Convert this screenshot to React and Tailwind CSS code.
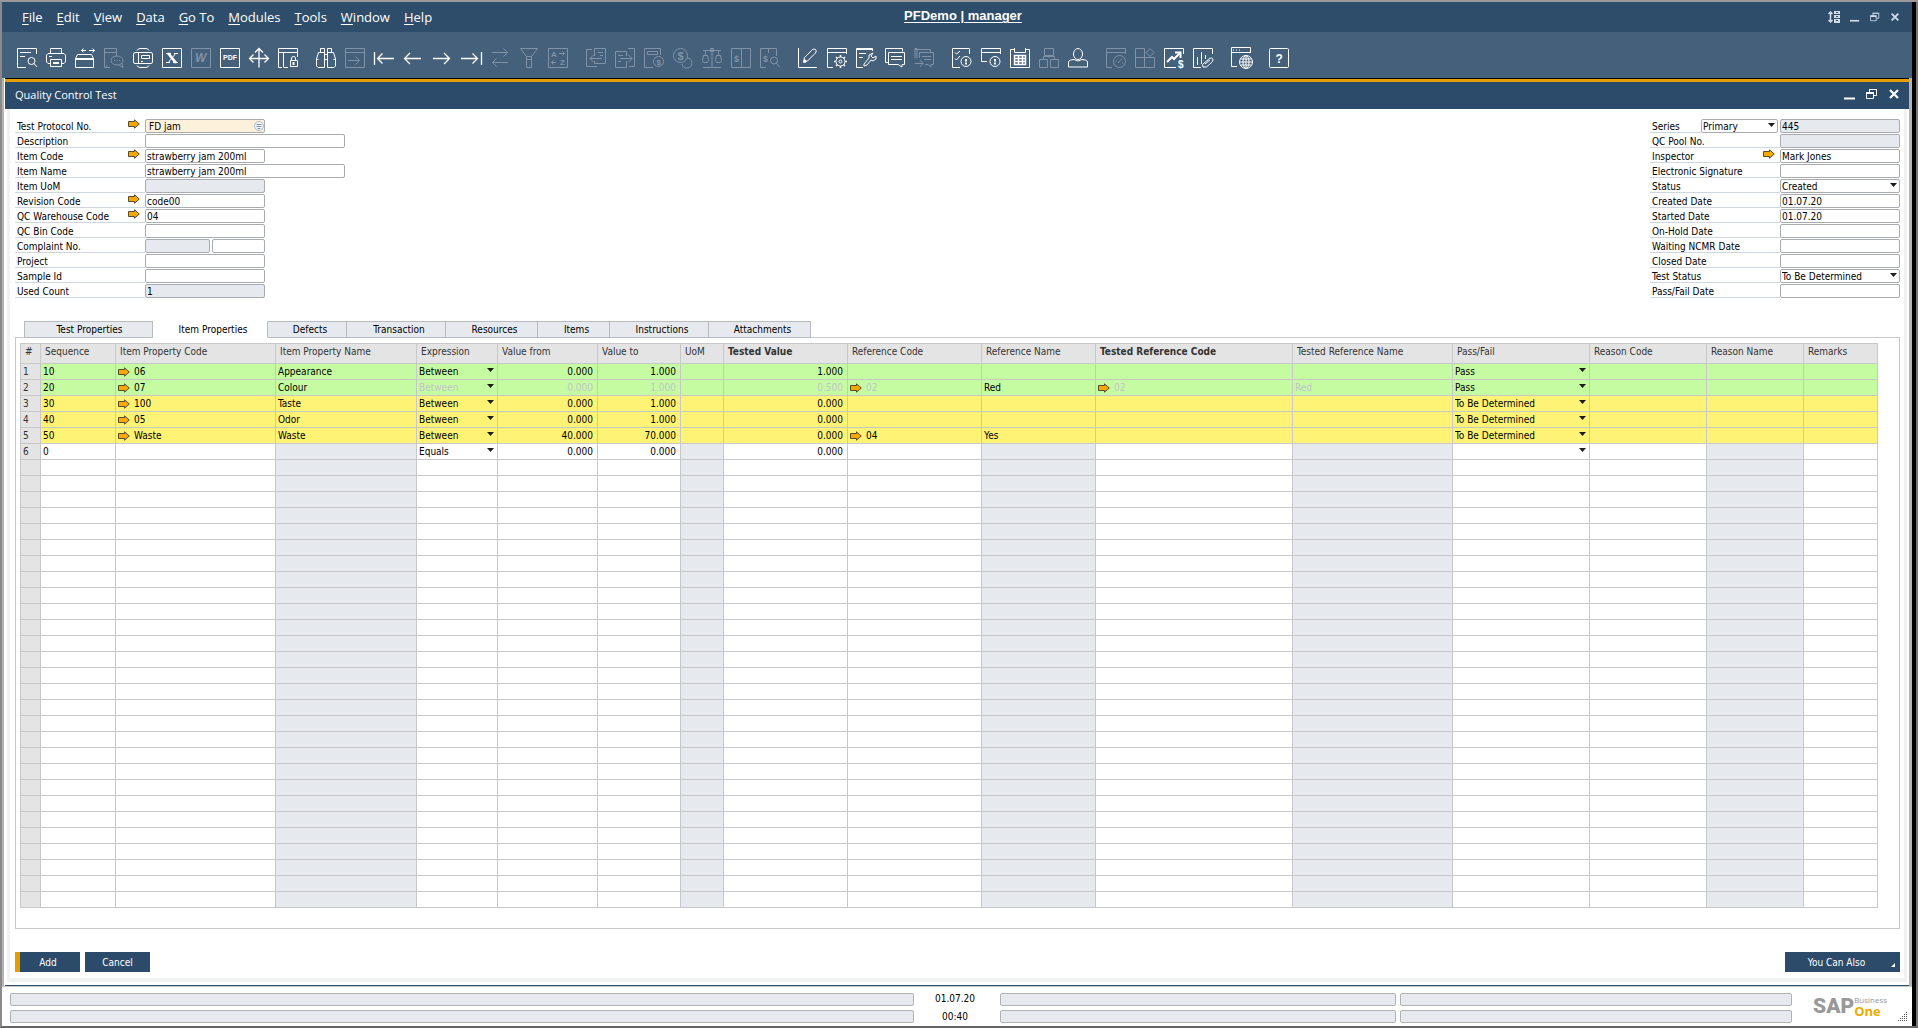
import { useState } from 'react'

const menus = ['File', 'Edit', 'View', 'Data', 'Go To', 'Modules', 'Tools', 'Window', 'Help']

const glyph = { fontFamily: 'Liberation Sans, sans-serif', fill: 'currentColor', stroke: 'none' }

// [name, drawing, disabled]
const toolGroups = [
  [
    ['Preview', <><path d="M19.500 6V.5H.5v19H9M3 4.500h11M3 8.500h5" /><circle cx="14.500" cy="13" r="3.500" /><path d="M17 15.500l3 3.500" /></>],
    ['Print', <><path d="M4.500 5V.5h11V5M4.500 15.500H2L.5 14V7L2 5.500h16L19.500 7v7L18 15.500h-2.500M3 8.500h3M4.500 11.500h11v7h-11z" /><path d="M7 15h6" strokeWidth="2" /></>],
    ['Send', <><path d="M.5 10.500h18v9H.5zM.5 10.500l2-4h14l2 4M6 2.500h5M14 2.500h6M8.500.5l-2 2 2 2M17.500.5l2 2-2 2M.5 11.500h18" /></>],
    ['SMS', <><path d="M12.500 8V.5H.5v19H6M.5 4.500h12M3 19.500V17" /><ellipse cx="13" cy="12.500" rx="6" ry="4.500" /><path d="M15 17l4 2.500-1-4.500M10 12.500h1M12.500 12.500h1M15 12.500h1" /></>, true],
    ['Fax', <><path d="M3 4.500h15q1.500 0 1.500 1.500v8q0 1.500-1.500 1.500H2Q.5 15.500.5 14V6Q.5 4.500 3 4.500zM5.500 4.500v11M8.500 7.500h8v3h-8zM8 13.500h2M4 2.500Q5 .5 7 .5h6q2 0 3 2M4 17.500q1 2 3 2h6q2 0 3-2" /></>],
    ['Export to Excel', <><path d="M.5.5h19v19H.5z" /><path d="M5.500 5l8 10M6.500 5l8 10" strokeWidth="2" /><path d="M14 5l-8 10M12 5.500h4M4 14.500h4M4 5.500h5M11 14.500h5" /></>],
    ['Export to Word', <><path d="M.5.5h19v19H.5z" /><text x="4" y="14" fontSize="12" fontWeight="bold" fontStyle="italic" style={glyph}>W</text></>, true],
    ['Export to PDF', <><path d="M.5.5h19v19H.5z" /><text x="3" y="12" fontSize="7" fontWeight="bold" style={glyph}>PDF</text></>],
    ['Launch Application', <><path d="M10 .5v19M.5 10.500h19M6 4.500L10 .5l4 4M4.500 6.500l-4 4 4 4M15.500 6.500l4 4-4 4" strokeWidth="1.300" /></>],
    ['Lock Screen', <><path d="M10 19.500H6M4 19.500H.5V.5h19V9M.5 4.500h19M5.500 4.500v15M13.500 12V10q0-1.500 2-1.500t2 1.500v2" /><path d="M12.500 12.500h7v6h-7z" /><path d="M15.500 14v3" strokeWidth="2" /></>],
  ],
  [
    ['Find', <><path d="M4.500 4V.5h4V5M11.500 5V.5h4V4M2.500 4.500h6v15H2L.5 18v-7zM17.500 4.500h-6v15H18l1.500-1.500v-7zM8.500 6.500h3M8.500 11.500h3M.5 11.500h2M19.500 11.500h-2" /></>],
    ['Add Record', <><path d="M.5.5h19v19H.5zM.5 4.500h19M3 12.500h11M10.500 8.500l4 4-4 4" /></>, true],
    ['First Record', <><path d="M.5 4v13M4 10.500h16M8.500 5.500l-5 5 5 5" strokeWidth="1.300" /></>],
    ['Previous Record', <><path d="M2 10.500h16M7 5l-5.500 5.500L7 16" strokeWidth="1.300" /></>],
    ['Next Record', <><path d="M1 10.500h16M12 5l5.500 5.500L12 16" strokeWidth="1.300" /></>],
    ['Last Record', <><path d="M0 10.500h16M11.500 5.500l5 5-5 5M20.500 4v13" strokeWidth="1.300" /></>],
    ['Refresh', <><path d="M2 4.500h16M13.500.5l4 4-4 4M2 14.500h16M6.500 10.500l-4 4 4 4" /></>, true],
    ['Filter', <><path d="M1.500.5h17l-6 8v11h-5v-11zM7.500 8.500h5M7.500 11.500h5" /></>, true],
    ['Sort', <><path d="M.5.5h19v19H.5zM11 5.500h5M14.500 3.500l2 2-2 2M3 14.500h5M5.500 12.500l-2 2 2 2" /><text x="3" y="9" fontSize="8" fontWeight="bold" style={glyph}>A</text><text x="12" y="17" fontSize="8" fontWeight="bold" style={glyph}>Z</text></>, true],
  ],
  [
    ['Base Document', <><path d="M6 1.500H.5v17H11M8.500 8V.5h11v15h-11V13M12 4.500h5M14 7.500h3M4 10.500h12M7.500 7l-3.500 3.500 3.500 3.500" /></>, true],
    ['Target Document', <><path d="M13 .5h6.500v18H14M11.500 13v6.500H.5v-16h11V8M3 7.500h5M3 13.500h3M5 10.500h12M13.500 7l3.500 3.500-3.500 3.500" /></>, true],
    ['Gross Profit', <><path d="M16.500 7V.5H.5v19H9M3.500 3.500h10v3h-10z" /><circle cx="14.500" cy="13.500" r="5" /><text x="12.500" y="16.500" fontSize="8" fontWeight="bold" style={glyph}>$</text></>, true],
    ['Payment Means', <><circle cx="7.500" cy="7.500" r="7" /><path d="M14 10a5 5 0 1 1-5 6" /><text x="4.500" y="11.500" fontSize="11" fontWeight="bold" style={glyph}>$</text></>, true],
    ['Volume and Weight', <><path d="M1 2.500h18M10 0v19M1 19.500h18M8.500.5h3v3h-3zM3.500 3v4M16.500 3v4M1.500 7.500h4l1 5-1 2h-4l-1-2zM14.500 7.500h4l1 5-1 2h-4l-1-2z" /></>, true],
    ['Journal Preview', <><path d="M.5.5h19v19H.5zM10.500.5v19" /><text x="3" y="14" fontSize="9" fontWeight="bold" style={glyph}>$</text></>, true],
    ['Transaction Journal', <><path d="M16.500 8V.5H.5v19H6M8.500.5V5" /><text x="3" y="14" fontSize="9" fontWeight="bold" style={glyph}>$</text><circle cx="14" cy="12.500" r="3.500" /><path d="M16.500 15l3 4" /></>, true],
  ],
  [
    ['Layout Designer', <><path d="M.5 0v19.500H19M6.500 9.500l8-8q1.500-1 3 0t0 3.500l-8 8-4 1.500z" /><path d="M6 12l2 2" strokeWidth="2.500" /></>],
    ['Form Settings', <><path d="M19.500 6V.5H.5v19H6M.5 4.500h19" /><circle cx="13.500" cy="13.500" r="4.500" /><circle cx="13.500" cy="13.500" r="1.500" /><path d="M13.500 7v2M13.500 18v2M7 13.500h2M18 13.500h2M9 9l1.500 1.500M18 9l-1.500 1.500M9 18l1.500-1.500M18 18l-1.500-1.500" strokeWidth="1.500" /></>],
    ['Form Edit', <><path d="M16.500 3V.5H.5v19H7M3 5.500h7M3 9.500h4M.5 1.500h16M17 5l-2 3 2 2 3-2v3l-3 2-2-1-4 5-3 1v-2l5-6v-3z" /></>],
    ['Messages', <><path d="M4 14.500H.5V.5h17v3M3.500 4.500h16v12H17v2.500l-4-2.500H3.500zM6 8.500h11M6 11.500h11" /></>],
    ['Alerts', <><path d="M3 10V.5h-2v10M1 1.500h15.500V4M5.500 10V4.500h14v12H17v2.500l-3-2.500h-3M8 8.500h9M10 11.500h7M1 15.500h8M6 12l3 3.500-3 3.500" /></>, true],
  ],
  [
    ['Approval', <><path d="M17.500 6V.5H.5v19H8M3 4.500l1.500 1.500L8 3M3 10.500l1.500 1.500L8 8" /><circle cx="14" cy="13.500" r="5" /><path d="M14 11v2.500M14 14.500v2" strokeWidth="2" /></>],
    ['Decisions', <><path d="M19.500 6V.5H.5v13H6M.5 4.500h19" /><circle cx="14" cy="13.500" r="5" /><path d="M14 11v2.500M14 14.500v2" strokeWidth="2" /></>],
    ['Calendar', <><path d="M4.500 1.500h-4v18h19v-18h-4M4.500 0v4.500h11V0" /><path d="M4.500 7.500h11v9h-11zM8.500 7.500v9M12.500 7.500v9M4.500 10.500h11M4.500 13.500h11" strokeWidth="1.500" /></>],
    ['Org Chart', <><path d="M5.500.5h9v7h-9zM.5 11.500h8v8h-8zM11.500 11.500h8v8h-8zM10 7.500V10M4.500 11V8.500h11V11" /></>, true],
    ['User', <><ellipse cx="10" cy="6" rx="4.500" ry="5.500" /><path d="M6 11.500q-4 0-5.500 2v5.500h19v-5.500q-1.500-2-5.500-2M6 11.500q4 3 8 0" /></>],
  ],
  [
    ['Cockpit', <><path d="M19.500 6V.5H.5v19H6M.5 4.500h19" /><circle cx="13.500" cy="13.500" r="6" /><path d="M12 15l4-4.500M10 13h1M16 15h1" /></>, true],
    ['Widgets', <><path d="M.5.5h9v19H.5zM.5 9.500h19v10h-10M15 .5l4 4-4 4-4-4z" /></>, true],
    ['Sales Analysis', <><path d="M19.500 6V.5H.5v19H12" /><path d="M3 14l5-5 2 2 6-6M11 4.500h5.500V10" strokeWidth="2" /><text x="14" y="19.500" fontSize="10" fontWeight="bold" style={glyph}>$</text></>],
    ['Report', <><path d="M19.500 6V.5H.5v19H8M4.500 9v8M8.500 4v12M12.500 7v4M9.500 16.500l7-6q2-1 3 0t0 3l-6 5.500h-3.500zM12 16l5-4" /></>],
  ],
  [
    ['Browser', <><path d="M19.500 5V-.5H.5v19H6M.5 4.500h19M2 2h1M5 2h1M8 2h1" /><circle cx="15" cy="14" r="6.500" /><ellipse cx="15" cy="14" rx="3" ry="6.500" /><path d="M15 7.500v13M8.500 14h13M9.500 11h11M9.500 17h11" /></>],
  ],
  [
    ['Help', <><rect x=".5" y=".5" width="19" height="19" rx="1" /><text x="6.500" y="14.500" fontSize="12" fontWeight="bold" style={glyph}>?</text></>],
  ],
]

const leftFields = [
  { id: 'protocol', label: 'Test Protocol No.', value: 'FD jam', arrow: true, lookup: true },
  { id: 'description', label: 'Description', value: '', wide: true },
  { id: 'itemCode', label: 'Item Code', value: 'strawberry jam 200ml', arrow: true },
  { id: 'itemName', label: 'Item Name', value: 'strawberry jam 200ml', wide: true },
  { id: 'uom', label: 'Item UoM', value: '', locked: true },
  { id: 'revision', label: 'Revision Code', value: 'code00', arrow: true },
  { id: 'warehouse', label: 'QC Warehouse Code', value: '04', arrow: true },
  { id: 'bin', label: 'QC Bin Code', value: '' },
  { id: 'complaint', label: 'Complaint No.', value: '', split: true },
  { id: 'project', label: 'Project', value: '' },
  { id: 'sample', label: 'Sample Id', value: '' },
  { id: 'used', label: 'Used Count', value: '1', locked: true },
]

const rightFields = [
  { id: 'pool', label: 'QC Pool No.', value: '', locked: true },
  { id: 'inspector', label: 'Inspector', value: 'Mark Jones', arrow: true },
  { id: 'signature', label: 'Electronic Signature', value: '' },
  { id: 'status', label: 'Status', value: 'Created', select: true },
  { id: 'created', label: 'Created Date', value: '01.07.20' },
  { id: 'started', label: 'Started Date', value: '01.07.20' },
  { id: 'onHold', label: 'On-Hold Date', value: '' },
  { id: 'ncmr', label: 'Waiting NCMR Date', value: '' },
  { id: 'closed', label: 'Closed Date', value: '' },
  { id: 'testStatus', label: 'Test Status', value: 'To Be Determined', select: true },
  { id: 'passFail', label: 'Pass/Fail Date', value: '' },
]

const tabs = [
  ['Test Properties', 'w-[129px]'],
  ['Item Properties', 'w-[115px]'],
  ['Defects', 'w-[79px]'],
  ['Transaction', 'w-[99px]'],
  ['Resources', 'w-[92px]'],
  ['Items', 'w-[72px]'],
  ['Instructions', 'w-[99px]'],
  ['Attachments', 'w-[102px]'],
]

const columns = [
  { key: 'seq', title: 'Sequence', width: 'w-[75px]' },
  { key: 'code', title: 'Item Property Code', width: 'w-[160px]', link: true },
  { key: 'name', title: 'Item Property Name', width: 'w-[141px]', locked: true },
  { key: 'expr', title: 'Expression', width: 'w-[81px]', select: true },
  { key: 'from', title: 'Value from', width: 'w-[100px]', right: true },
  { key: 'to', title: 'Value to', width: 'w-[83px]', right: true },
  { key: 'uom', title: 'UoM', width: 'w-[43px]', locked: true },
  { key: 'tested', title: 'Tested Value', width: 'w-[124px]', right: true, bold: true },
  { key: 'refCode', title: 'Reference Code', width: 'w-[134px]', link: true },
  { key: 'refName', title: 'Reference Name', width: 'w-[114px]', locked: true },
  { key: 'testedRef', title: 'Tested Reference Code', width: 'w-[197px]', link: true, bold: true },
  { key: 'testedRefName', title: 'Tested Reference Name', width: 'w-[160px]', locked: true },
  { key: 'result', title: 'Pass/Fail', width: 'w-[137px]', select: true },
  { key: 'reason', title: 'Reason Code', width: 'w-[117px]' },
  { key: 'reasonName', title: 'Reason Name', width: 'w-[97px]', locked: true },
  { key: 'remarks', title: 'Remarks', width: 'w-[74px]' },
]

const rows = [
  { seq: '10', code: '06', name: 'Appearance', expr: 'Between', from: '0.000', to: '1.000', tested: '1.000', result: 'Pass' },
  {
    seq: '20', code: '07', name: 'Colour', expr: 'Between', from: '0.000', to: '1.000', tested: '0.500',
    refCode: '02', refName: 'Red', testedRef: '02', testedRefName: 'Red', result: 'Pass',
    muted: ['expr', 'from', 'to', 'tested', 'refCode', 'testedRef', 'testedRefName'],
  },
  { seq: '30', code: '100', name: 'Taste', expr: 'Between', from: '0.000', to: '1.000', tested: '0.000', result: 'To Be Determined' },
  { seq: '40', code: '05', name: 'Odor', expr: 'Between', from: '0.000', to: '1.000', tested: '0.000', result: 'To Be Determined' },
  { seq: '50', code: 'Waste', name: 'Waste', expr: 'Between', from: '40.000', to: '70.000', tested: '0.000', refCode: '04', refName: 'Yes', result: 'To Be Determined' },
  { seq: '0', expr: 'Equals', from: '0.000', to: '0.000', tested: '0.000', result: '' },
]

const TOTAL_ROWS = 34

const tint = { Pass: 'bg-[#c5fca2]', 'To Be Determined': 'bg-[#fff375]' }

function LinkArrow() {
  return (
    <svg width="12" height="10" viewBox="0 0 12 10" className="shrink-0">
      <path d="M.5 2.500h6V.8L11.300 5 6.500 9.200V7.500h-6z" fill="#f5a800" stroke="#5a4a30" />
    </svg>
  )
}

function Caret() {
  return (
    <svg width="7" height="4" viewBox="0 0 7 4" className="pointer-events-none absolute top-1 right-[3px]">
      <path d="M0 0h7L3.500 4z" fill="#1c1c1c" />
    </svg>
  )
}

function Select({ id, value, label, className }) {
  return (
    <div className="relative h-full w-full">
      <select id={id} aria-label={label} defaultValue={value} className={`block h-full w-full appearance-none outline-none ${className}`}>
        <option>{value}</option>
      </select>
      <Caret />
    </div>
  )
}

const box = 'h-[14px] w-full rounded-[2px] border border-[#a8abb0] px-px leading-[11px] outline-none'

function Field({ field }) {
  const { id, label, value, arrow, lookup, wide, locked, split, select } = field
  const fill = locked || split ? 'bg-[#e6eaee]' : lookup ? 'bg-[#fdf1dc] pl-[3px]' : 'bg-white'
  return (
    <div className="flex h-[14px]">
      <div className="flex w-[130px] items-start justify-between border-b border-[#cfd6dd] pr-[5px] pl-[2px]">
        <label htmlFor={id} className="leading-[15px]">{label}</label>
        {arrow && <LinkArrow />}
      </div>
      <div className={`relative flex gap-[2px] ${wide ? 'w-[200px]' : 'w-[120px]'}`}>
        {select ? (
          <Select id={id} value={value} className={`${box} bg-white`} />
        ) : (
          <input id={id} defaultValue={value} readOnly={locked} className={`${box} ${fill}`} />
        )}
        {split && <input aria-label="Complaint line" className={`${box} max-w-[53px] bg-white`} />}
        {lookup && (
          <svg width="10" height="10" viewBox="0 0 10 10" className="absolute top-[2px] right-px">
            <circle cx="5" cy="5" r="4.500" fill="#f2f5fa" stroke="#a9b8cf" />
            <path d="M2.500 3.500h5M2.500 5.500h5M3.500 7.500h3" stroke="#7f93b5" />
          </svg>
        )}
      </div>
    </div>
  )
}

function Cell({ col, row }) {
  const value = row?.[col.key] ?? ''
  const muted = row?.muted?.includes(col.key) ? 'text-[#c3c3cf]' : ''
  const fill = tint[row?.result] || (col.locked ? 'bg-[#e6eaee]' : 'bg-white')
  const isSelect = col.select && row
  return (
    <td className={`h-4 overflow-hidden border-r border-b border-[#c8c8c8] p-0 whitespace-nowrap ${fill} ${muted} ${col.right ? 'text-right' : ''}`}>
      {isSelect ? (
        <div className="h-[15px]">
          <Select label={col.title} value={value} className="pl-[2px]" />
        </div>
      ) : col.link && value ? (
        <div className="flex items-center gap-1 pl-[2px] leading-[15px]">
          <LinkArrow />
          {value}
        </div>
      ) : (
        <div className="pr-1 pl-[2px] leading-[15px]">{value}</div>
      )}
    </td>
  )
}

function WindowButtons({ size, className = '' }) {
  const shapes = [
    ['Minimize', <path d="M0 10.500h11" strokeWidth="2" />],
    ['Restore', <><path d="M.5 4.500h7v6h-7zM3.500 4V1.500h7v6H8M3 1.500h8" /><path d="M.5 5h7" strokeWidth="2" /></>],
    ['Close', <path d="M2 2l8 8M10 2l-8 8" strokeWidth="2.200" />],
  ]
  return (
    <div className={`flex items-center gap-[10px] ${className}`}>
      {shapes.map(([name, shape]) => (
        <button key={name} aria-label={name}>
          <svg width={size} height={size} viewBox="0 0 12 12" fill="none" stroke="currentColor">{shape}</svg>
        </button>
      ))}
    </div>
  )
}

function StatusBox() {
  return <div className="h-[13px] rounded-[2px] border border-[#b0b3b6] bg-[#e6eaee]" />
}

export default function App() {
  const [tab, setTab] = useState('Item Properties')

  return (
    <div className="flex min-h-screen flex-col border-y-2 border-l-2 border-t-[#999] border-b-[#666] border-l-[#8a8a8a] bg-white font-['DejaVu_Sans_Condensed','DejaVu_Sans',sans-serif] text-[10px] text-black">
      <div className="flex grow border-r-2 border-[#777]">
        <div className="flex min-w-0 grow flex-col border-r-4 border-black">
          <header className="font-['Open_Sans',sans-serif] text-[13px] text-white">
            <div className="grid h-[30px] grid-cols-[1fr_auto_1fr] items-center bg-[#2d4d6b]">
              <nav className="flex gap-[14px] pt-0.5 pl-5">
                {menus.map((m) => (
                  <button key={m}>
                    <span className="underline underline-offset-2">{m[0]}</span>
                    {m.slice(1)}
                  </button>
                ))}
              </nav>
              <div className="pb-0.5 pl-3">
                <a href="#" className="font-['Liberation_Sans',sans-serif] font-bold underline underline-offset-2">PFDemo | manager</a>
              </div>
              <div className="flex items-center justify-end gap-[10px] pr-3 text-[#d3dce4]">
                <button aria-label="Arrange">
                  <svg width="12" height="12" viewBox="0 0 12 12" fill="none" stroke="currentColor">
                    <path d="M2.500 1v10M.5 3l2-2 2 2M.5 9l2 2 2-2" strokeWidth="1.500" />
                    <path d="M6 0h6v3H6zM6 4h6v3H6zM6 8h6v4H6z" fill="currentColor" stroke="none" />
                    <path d="M8 1.500h2M8 5.500h2M8 9.500h2" stroke="#2d4d6b" />
                  </svg>
                </button>
                <WindowButtons size={10} />
              </div>
            </div>
            <div className="flex h-[46px] items-center gap-[18px] bg-[#44607b] pt-[6px] pl-[15px]">
              {toolGroups.map((group, i) => (
                <div key={i} className="flex gap-[9px]">
                  {group.map(([name, shape, disabled]) => (
                    <button key={name} aria-label={name} disabled={disabled} className="text-white disabled:text-[#8093a6]">
                      <svg width="20" height="20" viewBox="0 0 20 20" fill="none" stroke="currentColor" className="block overflow-visible">{shape}</svg>
                    </button>
                  ))}
                </div>
              ))}
            </div>
          </header>

          <div className="flex grow flex-col border-r-[3px] border-l-2 border-[#b4b2b2] pl-px">
            <section className="flex grow flex-col border-t border-b border-t-black border-b-[#2d4d6b]">
              <div className="flex h-[30px] items-center justify-between border-t-[3px] border-[#e59d00] bg-[#2c4b6a] pr-[9px] pl-[10px] text-white">
                <h1 className="font-['Open_Sans',sans-serif] text-[11px]">Quality Control Test</h1>
                <WindowButtons size={12} className="pb-1" />
              </div>

              <div className="mx-[2px] mb-[3px] grow border-x-[3px] border-b-4 border-[#f0f2f2] pt-[10px] pr-1 pb-[6px] pl-[5px]">
                <div className="flex justify-between">
                  <div className="flex flex-col gap-px">
                    {leftFields.map((f) => <Field key={f.id} field={f} />)}
                  </div>
                  <div className="flex flex-col gap-px">
                    <div className="flex h-[14px] gap-[2px]">
                      <div className="flex">
                        <label htmlFor="series" className="w-[51px] border-b border-[#cfd6dd] pl-[2px] leading-[15px]">Series</label>
                        <div className="w-[77px]">
                          <Select id="series" value="Primary" className={`${box} bg-white`} />
                        </div>
                      </div>
                      <input aria-label="Series number" readOnly defaultValue="445" className={`${box} max-w-[120px] bg-[#e6eaee]`} />
                    </div>
                    {rightFields.map((f) => <Field key={f.id} field={f} />)}
                  </div>
                </div>

                <div role="tablist" className="relative mt-[23px] flex pl-[9px]">
                  {tabs.map(([name, width]) => (
                    <button
                      key={name}
                      role="tab"
                      aria-selected={tab === name}
                      onClick={() => setTab(name)}
                      className={`-mb-px h-[17px] border-t border-r border-b pl-[6px] leading-[15px] first:border-l first:pl-0.5 ${width} ${
                        tab === name ? 'border-y-white border-r-[#b9bcbf] bg-white' : 'border-[#b9bcbf] bg-[#e6eaee]'
                      }`}
                    >
                      {name}
                    </button>
                  ))}
                </div>

                <div className="border border-[#c8c8c8] pt-[5px] pr-[21px] pb-5 pl-1">
                  <table className="w-full table-fixed border-separate border-spacing-0">
                    <thead>
                      <tr className="bg-[#e4e4e4] text-left text-[#333]">
                        <th className="h-[21px] w-[21px] border border-[#c8c8c8] p-0 pb-1 pl-1 leading-[15px] font-normal">#</th>
                        {columns.map((c) => (
                          <th key={c.key} className={`border-y border-r border-[#c8c8c8] p-0 pb-1 pl-1 leading-[15px] whitespace-nowrap ${c.width} ${c.bold ? 'font-bold' : 'font-normal'}`}>
                            {c.title}
                          </th>
                        ))}
                      </tr>
                    </thead>
                    <tbody>
                      {Array.from({ length: TOTAL_ROWS }, (_, i) => (
                        <tr key={i}>
                          <td className="h-4 border-x border-b border-[#c8c8c8] bg-[#e4e4e4] p-0 pl-[2px] leading-[15px] text-[#333]">
                            {rows[i] ? i + 1 : ''}
                          </td>
                          {columns.map((c) => <Cell key={c.key} col={c} row={rows[i]} />)}
                        </tr>
                      ))}
                    </tbody>
                  </table>
                </div>

                <div className="mt-[23px] flex gap-[5px] text-white">
                  <button className="h-5 w-[65px] border-l-[5px] border-[#e59d00] bg-[#2c4b6a] pr-1">Add</button>
                  <button className="h-5 w-[65px] bg-[#2c4b6a]">Cancel</button>
                  <button className="relative ml-auto h-5 w-[115px] bg-[#2c4b6a] pr-3">
                    You Can Also
                    <svg width="4" height="4" viewBox="0 0 4 4" className="absolute right-[5px] bottom-[5px]">
                      <path d="M4 0v4H0z" fill="#fff" />
                    </svg>
                  </button>
                </div>
              </div>
            </section>
          </div>

          <footer className="flex border-t border-[#c9c9c9] pt-[6px] pb-[3px] pl-2">
            <div className="grid grow grid-cols-[904fr_78px_396fr_392fr] gap-x-1 gap-y-1">
              <StatusBox />
              <div className="pr-1 text-center leading-[11px]">01.07.20</div>
              <StatusBox />
              <StatusBox />
              <StatusBox />
              <div className="pr-1 text-center leading-[13px]">00:40</div>
              <StatusBox />
              <StatusBox />
            </div>
            <div className="relative flex h-[30px] w-[120px] shrink-0 items-center pb-1 pl-[21px]">
              <span className="font-['Roboto',sans-serif] text-[21px] leading-[24px] font-black text-[#999]">SAP</span>
              <div className="font-['Open_Sans',sans-serif]">
                <div className="text-[8px] leading-[10px] text-[#999]">Business</div>
                <div className="text-[13px] leading-[12px] font-bold text-[#f0ab00]">One</div>
              </div>
              <svg width="12" height="12" viewBox="0 0 12 12" className="absolute right-1 bottom-0" fill="#555">
                {[0, 1, 2, 3, 4].map((r) =>
                  Array.from({ length: r + 1 }, (_, c) => (
                    <rect key={`${r}-${c}`} x={10 - c * 2} y={r * 2 + 1} width="1" height="1" />
                  ))
                )}
              </svg>
            </div>
          </footer>
        </div>
      </div>
    </div>
  )
}
